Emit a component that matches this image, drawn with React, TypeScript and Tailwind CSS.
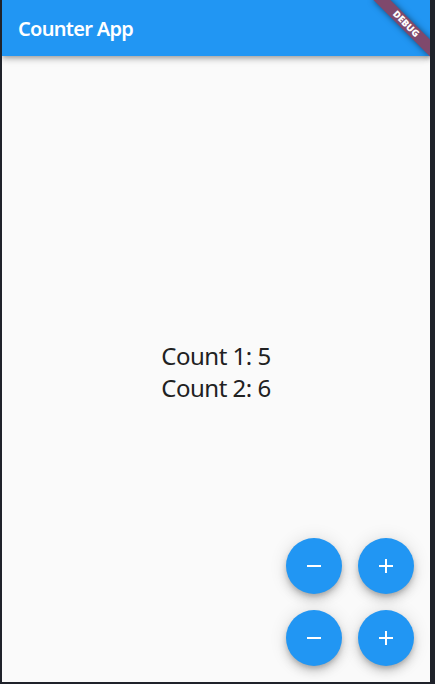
import React from "react";

const font = { fontFamily: "'Noto Sans', 'Open Sans', sans-serif" };

function MinusIcon() {
  return (
    <svg viewBox="0 0 24 24" width={24} height={24} fill="white">
      <path d="M19 13H5v-2h14v2z" />
    </svg>
  );
}

function PlusIcon() {
  return (
    <svg viewBox="0 0 24 24" width={24} height={24} fill="white">
      <path d="M19 13h-6v6h-2v-6H5v-2h6V5h2v6h6v2z" />
    </svg>
  );
}

function Fab({ children, label }: { children: React.ReactNode; label: string }) {
  return (
    <button
      type="button"
      aria-label={label}
      className="grid h-14 w-14 place-items-center rounded-full bg-[#2196f3] shadow-[0_3px_5px_-1px_rgba(0,0,0,0.2),0_6px_10px_0_rgba(0,0,0,0.14),0_1px_18px_0_rgba(0,0,0,0.12)]"
    >
      {children}
    </button>
  );
}

export default function App() {
  return (
    <div className="flex h-[684px] w-[435px] bg-[#1f222a] pb-[2px] pl-[2px] pr-[5px]" style={font}>
      <div className="relative flex flex-1 flex-col overflow-hidden bg-[#fafafa]">
        <header className="relative z-10 flex h-14 shrink-0 items-center bg-[#2196f3] px-4 shadow-[0_2px_4px_-1px_rgba(0,0,0,0.2),0_4px_5px_0_rgba(0,0,0,0.14),0_1px_10px_0_rgba(0,0,0,0.12)]">
          <h1 className="pt-[2px] text-[20px] font-semibold tracking-[-0.035em] text-white">Counter App</h1>
        </header>

        <main className="flex flex-1 flex-col items-center justify-center pt-[5px] text-[24px] leading-[32px] tracking-[-0.02em] text-[#212121]">
          <p>Count 1: 5</p>
          <p>Count 2: 6</p>
        </main>

        <div className="absolute right-4 bottom-4 z-10 flex flex-col gap-4">
          <div className="flex gap-4">
            <Fab label="Decrement 1">
              <MinusIcon />
            </Fab>
            <Fab label="Increment 1">
              <PlusIcon />
            </Fab>
          </div>
          <div className="flex gap-4">
            <Fab label="Decrement 2">
              <MinusIcon />
            </Fab>
            <Fab label="Increment 2">
              <PlusIcon />
            </Fab>
          </div>
        </div>

        {/* debug ribbon */}
        <div className="absolute top-0 right-0 z-20 h-0 w-0 rotate-45">
          <div className="absolute top-[28px] left-[-40px] flex h-[12px] w-[80px] items-center justify-center bg-[#7f496c] shadow-[0_0_6px_rgba(0,0,0,0.5)]">
            <span className="text-[9.5px] leading-none font-black text-white">DEBUG</span>
          </div>
        </div>
      </div>
    </div>
  );
}
